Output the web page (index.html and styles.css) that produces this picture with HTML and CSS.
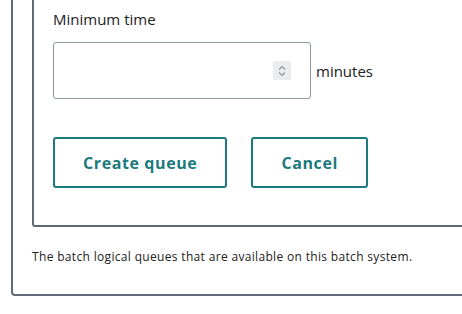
FILE: index.html
```html
<!DOCTYPE html>
<html lang="en">
<head>
    <meta charset="UTF-8">
    <meta name="viewport" content="width=device-width, initial-scale=1.0">
    <title>Create queue</title>
    <link rel="stylesheet" href="styles.css">
</head>
<body>
    <div class="panel">
        <div class="form-box">
            <div class="field">
                <label for="min_time">Minimum time</label>
                <div class="field-row">
                    <div class="number-box">
                        <input type="text" id="min_time">
                        <span class="spin">
                            <svg width="10" height="14" viewBox="0 0 10 14">
                                <path d="M2 5.5 L5 2.5 L8 5.5" fill="none" stroke="#8a939b" stroke-width="1.1"/>
                                <path d="M2 8.5 L5 11.5 L8 8.5" fill="none" stroke="#8a939b" stroke-width="1.1"/>
                            </svg>
                        </span>
                    </div>
                    <span class="unit">minutes</span>
                </div>
            </div>

            <div class="actions">
                <button class="button">Create queue</button>
                <button class="button">Cancel</button>
            </div>
        </div>

        <p class="help">The batch logical queues that are available on this batch system.</p>
    </div>
</body>
</html>
```

FILE: styles.css
```css
body {
    font-family: "Open Sans", Lato, sans-serif;
    color: #222;
    background-color: white;
    margin: 0;
    padding: 0 0 0 11px;
    overflow: hidden;
}
.panel {
    width: 600px;
    border: 2px solid #5f6c78;
    border-top: none;
    border-radius: 0 0 4px 4px;
    padding: 0 0 29px 19px;
    margin-top: -4px;
}
.form-box {
    border: 2px solid #5f6c78;
    border-top: none;
    border-radius: 0 0 3px 3px;
    padding: 13px 0 37px 19px;
}
.field label {
    display: block;
    font-size: 15px;
    line-height: 20px;
    margin-bottom: 13px;
}
.field-row {
    display: flex;
    align-items: center;
}
.number-box {
    width: 237px;
    height: 55px;
    border: 1px solid #8e989f;
    border-radius: 3px;
    display: flex;
    align-items: center;
    padding-right: 19px;
}
.number-box input {
    flex: 1;
    border: none;
    outline: none;
    height: 100%;
    background: transparent;
}
.spin {
    width: 18px;
    height: 19px;
    background-color: #eaecef;
    display: flex;
    align-items: center;
    justify-content: center;
}
.unit {
    font-size: 15px;
    margin-left: 5px;
}
.actions {
    display: flex;
    gap: 24px;
    margin-top: 38px;
}
.button {
    font-family: "Open Sans", sans-serif;
    font-weight: bold;
    font-size: 16px;
    letter-spacing: 0.6px;
    color: #1b7a7e;
    background-color: white;
    border: 2px solid #1b7a7e;
    border-radius: 3px;
    height: 51px;
    padding: 0 28px;
    cursor: pointer;
}
.button:hover {
    background-color: #f0f7f7;
}
.help {
    font-size: 12px;
    line-height: 16px;
    letter-spacing: 0.33px;
    margin: 22px 0 0 0;
}
```
